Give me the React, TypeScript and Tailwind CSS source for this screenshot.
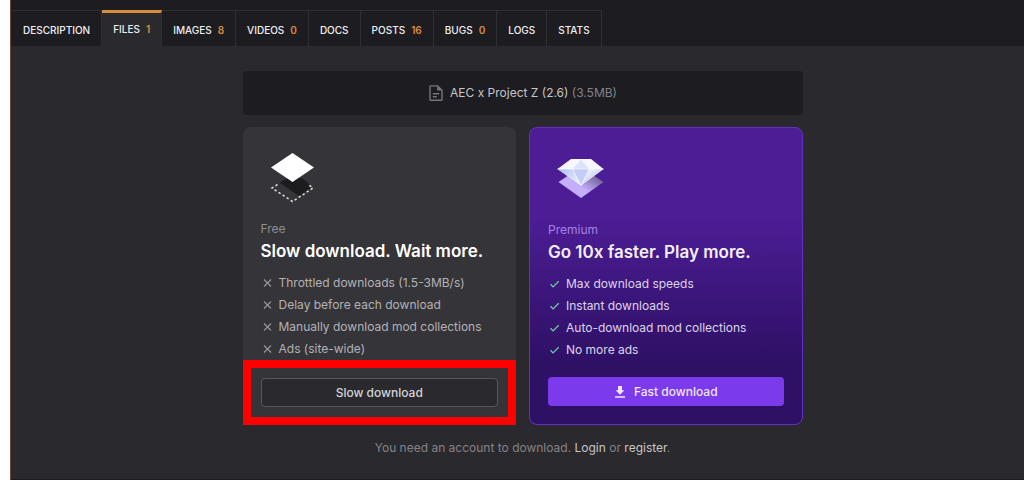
import type { ReactNode } from 'react'

type Tab = { label: string; count?: number; active?: boolean }

const tabs: Tab[] = [
  { label: 'Description' },
  { label: 'Files', count: 1, active: true },
  { label: 'Images', count: 8 },
  { label: 'Videos', count: 0 },
  { label: 'Docs' },
  { label: 'Posts', count: 16 },
  { label: 'Bugs', count: 0 },
  { label: 'Logs' },
  { label: 'Stats' },
]

const freeItems = [
  'Throttled downloads (1.5-3MB/s)',
  'Delay before each download',
  'Manually download mod collections',
  'Ads (site-wide)',
]

const premiumItems = [
  'Max download speeds',
  'Instant downloads',
  'Auto-download mod collections',
  'No more ads',
]

function FileIcon() {
  return (
    <svg className="size-4 text-[#77767b]" viewBox="0 0 16 16" fill="none" stroke="currentColor" strokeWidth="1.4">
      <path d="M3 .9h6.6L14 5.2v9.2a.8.8 0 0 1-.8.8H2.8a.8.8 0 0 1-.8-.8V1.7A.8.8 0 0 1 3 .9Z" />
      <path d="M9.2 1v4.6H14Z" fill="currentColor" stroke="none" />
      <path d="M4.8 8.7h6.4M4.8 11.8h4" />
    </svg>
  )
}

function CrossIcon() {
  return (
    <svg className="size-3 text-[#99989c]" viewBox="0 0 12 12" fill="none" stroke="currentColor" strokeWidth="1.1">
      <path d="m3 2.5 7 7m0-7-7 7" />
    </svg>
  )
}

function CheckIcon() {
  return (
    <svg className="size-3 text-[#6ec9a0]" viewBox="0 0 12 12" fill="none" stroke="currentColor" strokeWidth="1.3">
      <path d="m2.500 6.300 2.600 2.600 5.600-5.600" />
    </svg>
  )
}

function DownloadIcon() {
  return (
    <svg className="size-3" viewBox="0 0 12 12" fill="currentColor">
      <path d="M4 0h4v4.2h2.4L6 8.8 1.6 4.2H4zM1 10.2h10v1.5H1z" />
    </svg>
  )
}

/** White tile floating over its dashed footprint */
function TileArt() {
  return (
    <svg className="h-13 w-12" viewBox="0 0 48 52">
      <path d="m11 30 19 13 13-8.500L34 25.500 20 24Z" fill="#1c1c1e" />
      <path d="M8.500 31.500 3 35l20.500 13.500L44 35l-5-3.500" fill="none" stroke="#dededf" strokeWidth="1.500" strokeDasharray="2.400 2.400" />
      <path d="m12 30 4-3M39 31l-8-5.500" fill="none" stroke="#1c1c1e" strokeWidth="1.500" strokeDasharray="2.400 2.400" />
      <path d="M23.500 0 45 14.500 23.500 29 2 14.500Z" fill="#fff" />
    </svg>
  )
}

/** Faceted diamond with a lilac tile beneath */
function DiamondArt() {
  return (
    <svg className="h-13 w-12" viewBox="0 0 48 52">
      <defs>
        <linearGradient id="tile" x1="0.2" y1="0.9" x2="0.8" y2="0.3">
          <stop offset="0.45" stopColor="#c5aefc" />
          <stop offset="1" stopColor="#75669f" />
        </linearGradient>
        <linearGradient id="facet" x1="0" y1="0" x2="1" y2="1">
          <stop offset="0" stopColor="#a9bdf8" />
          <stop offset="1" stopColor="#f7f8ff" />
        </linearGradient>
        <linearGradient id="facetEnd" x1="0" y1="0" x2="1" y2="1">
          <stop offset="0" stopColor="#fff" />
          <stop offset="1" stopColor="#a5b4ef" />
        </linearGradient>
      </defs>
      <path d="M2.500 28 25 13l22.500 15L25 44Z" fill="url(#tile)" />
      <path d="M15 5h20l12.500 10L25 31.500 1.500 15Z" fill="#f8f9ff" />
      <path d="M1.500 15h15L25 31.500Z" fill="url(#facet)" />
      <path d="M16.500 15h17L25 31.500Z" fill="#c3cdf6" />
      <path d="M33.500 15h14L25 31.500Z" fill="url(#facetEnd)" />
      <path d="M25 5 16.500 15h17Z" fill="#dbe2fb" />
      <path d="M1.500 15h46M25 5l-8.500 10L25 31.500 33.500 15Z" fill="none" stroke="#fff" strokeWidth="0.6" />
    </svg>
  )
}

function FeatureList({ items, icon, className }: { items: string[]; icon: ReactNode; className: string }) {
  return (
    <ul className={className}>
      {items.map((item) => (
        <li key={item} className="flex items-center gap-1.5 leading-[22px]">
          {icon}
          {item}
        </li>
      ))}
    </ul>
  )
}

export default function App() {
  return (
    <div className="min-h-screen bg-white pl-2.5 font-['Inter',sans-serif] text-xs">
      <div className="min-h-screen border-l border-[#6b4a35] bg-[#1d1c20] pb-px">
        {/* Tabs */}
        <nav className="flex pt-2.5 pl-px">
          {tabs.map((tab) => (
            <a
              key={tab.label}
              href="#"
              className={
                tab.active
                  ? 'flex h-9 items-center gap-1.5 border-t-3 border-r border-[#2f2e32] border-t-[#d98c3c] bg-[#2a292d] px-[11px] pt-px text-[10px] font-medium text-[#f0f0f2] uppercase'
                  : 'flex h-9 items-center gap-1.5 border-t border-r border-[#2f2e32] px-[11px] pt-1 text-[10px] font-medium text-[#f0f0f2] uppercase'
              }
            >
              {tab.label}
              {tab.count !== undefined && <span className="font-semibold text-[#d98c3c]">{tab.count}</span>}
            </a>
          ))}
        </nav>

        <main className="min-h-[433px] bg-[#2a292d] pt-[25px] pl-2.5">
          <div className="mx-auto max-w-[560px]">
            {/* File name */}
            <div className="flex h-11 items-center justify-center gap-1.5 rounded bg-[#1d1c20]">
              <FileIcon />
              <p className="leading-5 text-[#c6c6c8]">
                AEC x Project Z (2.6) <span className="text-[#848388]">(3.5MB)</span>
              </p>
            </div>

            <div className="mt-3 grid grid-cols-2 gap-[13px]">
              {/* Free */}
              <section className="relative flex flex-col rounded-lg bg-[#353438] px-[18px] pt-[26px] pb-[18px]">
                <div className="pl-2">
                  <TileArt />
                </div>
                <p className="mt-3.5 leading-5 text-[#8e8d92]">Free</p>
                <h2 className="text-[17px] leading-6 font-semibold text-white">Slow download. Wait more.</h2>
                <FeatureList items={freeItems} icon={<CrossIcon />} className="mt-[9px] text-[#b3b2b6]" />
                <button type="button" className="mt-auto h-[29px] rounded-sm border border-[#57565b] bg-[#2a292d] font-medium text-[#d4d4d6]">
                  Slow download
                </button>
                <div className="pointer-events-none absolute inset-x-0 bottom-0 h-[65px] border-8 border-[#ff0000]" />
              </section>

              {/* Premium */}
              <section className="flex flex-col rounded-lg border border-[#6430c4] bg-linear-to-b from-[#4c1d95] from-30% to-[#2e1065] to-80% px-[18px] pt-[26px] pb-[18px]">
                <div className="pl-2">
                  <DiamondArt />
                </div>
                <p className="mt-3.5 leading-5 text-[#a582e8]">Premium</p>
                <h2 className="text-[17px] leading-6 font-semibold text-[#f3effc]">Go 10x faster. Play more.</h2>
                <FeatureList items={premiumItems} icon={<CheckIcon />} className="mt-[9px] text-[#dcd5ea]" />
                <button type="button" className="mt-4 flex h-[29px] items-center justify-center gap-2 rounded-sm bg-[#7c3aed] font-medium text-[#efe7fd]">
                  <DownloadIcon />
                  Fast download
                </button>
              </section>
            </div>

            <p className="mt-[13px] text-center leading-5 text-[#848388]">
              You need an account to download.{' '}
              <a href="#" className="text-[#c6c6c8]">Login</a> or{' '}
              <a href="#" className="text-[#c6c6c8]">register</a>.
            </p>
          </div>
        </main>
      </div>
    </div>
  )
}
